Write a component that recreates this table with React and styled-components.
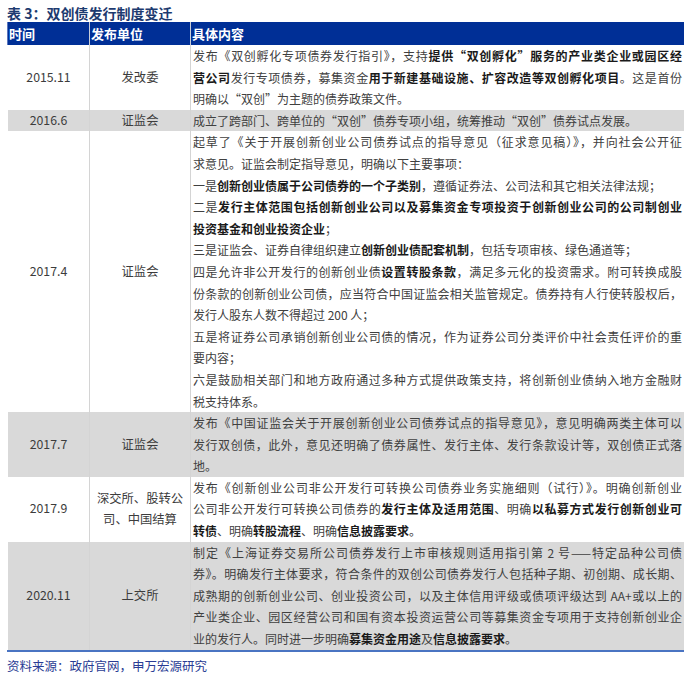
import React from "react";
import styled, { createGlobalStyle } from "styled-components";

const GlobalStyle = createGlobalStyle`
  html, body {
    margin: 0;
    padding: 0;
    background: #fff;
  }
  body {
    font-family: "Noto Sans CJK SC", "Noto Sans", sans-serif;
  }
`;

const Page = styled.div`
  width: 700px;
  padding-left: 7px;
  box-sizing: border-box;
`;

const Caption = styled.div`
  margin-top: 4px;
  height: 18px;
  line-height: 18px;
  font-size: 14px;
  font-weight: 700;
  color: #1d3a6f;
`;

const Table = styled.table`
  width: 671px;
  border-collapse: collapse;
  table-layout: fixed;
  border-bottom: 2px solid #4a74c2;
`;

const HeadCell = styled.th`
  width: ${(p) => p.$w}px;
  height: 23px;
  padding: 0 0 0 1px;
  background: #002f96;
  color: #fff;
  font-size: 13px;
  font-weight: 700;
  text-align: left;
  vertical-align: middle;
  border-left: 1px solid ${(p) => (p.$first ? "#5b78c0" : "#c8cdd8")};
`;

const Row = styled.tr`
  background: ${(p) => (p.$shade ? "#d9d9d9" : "#fff")};
`;

const MetaCell = styled.td`
  padding: 0 6px;
  text-align: center;
  vertical-align: middle;
  font-size: 12.3px;
  line-height: 21.6px;
  color: #3c3c3c;
  border-left: 1px solid ${(p) => (p.$first ? "transparent" : "#d4d4d4")};
`;

const ContentCell = styled.td`
  padding: 0 2px 0 2px;
  vertical-align: top;
  font-size: 12px;
  line-height: 21.6px;
  color: #404040;
  border-left: 1px solid #d4d4d4;
`;

const Line = styled.div`
  white-space: nowrap;
  text-align: left;
  text-align-last: ${(p) => (p.$full ? "justify" : "left")};
`;

const Strong = styled.b`
  font-weight: 700;
  color: #1a1a1a;
`;

const Source = styled.div`
  margin-top: 4px;
  line-height: 20px;
  font-size: 12.5px;
  color: #2a3c94;
`;

const rows = [
  {
    date: "2015.11",
    org: "发改委",
    lines: [
      ["发布《双创孵化专项债券发行指引》，支持**提供“双创孵化”服务的产业类企业或园区经**", true],
      ["**营公司**发行专项债券，募集资金**用于新建基础设施、扩容改造等双创孵化项目**。这是首份", true],
      ["明确以“双创”为主题的债券政策文件。", false],
    ],
  },
  {
    date: "2016.6",
    org: "证监会",
    shade: true,
    lines: [["成立了跨部门、跨单位的“双创”债券专项小组，统筹推动“双创”债券试点发展。", false]],
  },
  {
    date: "2017.4",
    org: "证监会",
    lines: [
      ["起草了《关于开展创新创业公司债券试点的指导意见（征求意见稿）》，并向社会公开征", true],
      ["求意见。证监会制定指导意见，明确以下主要事项：", false],
      ["一是**创新创业债属于公司债券的一个子类别**，遵循证券法、公司法和其它相关法律法规；", false],
      ["二是**发行主体范围包括创新创业公司以及募集资金专项投资于创新创业公司的公司制创业**", true],
      ["**投资基金和创业投资企业**；", false],
      ["三是证监会、证券自律组织建立**创新创业债配套机制**，包括专项审核、绿色通道等；", false],
      ["四是允许非公开发行的创新创业债**设置转股条款**，满足多元化的投资需求。附可转换成股", true],
      ["份条款的创新创业公司债，应当符合中国证监会相关监管规定。债券持有人行使转股权后，", true],
      ["发行人股东人数不得超过 200 人；", false],
      ["五是将证券公司承销创新创业公司债的情况，作为证券公司分类评价中社会责任评价的重", true],
      ["要内容；", false],
      ["六是鼓励相关部门和地方政府通过多种方式提供政策支持，将创新创业债纳入地方金融财", true],
      ["税支持体系。", false],
    ],
  },
  {
    date: "2017.7",
    org: "证监会",
    shade: true,
    lines: [
      ["发布《中国证监会关于开展创新创业公司债券试点的指导意见》，意见明确两类主体可以", true],
      ["发行双创债，此外，意见还明确了债券属性、发行主体、发行条款设计等，双创债正式落", true],
      ["地。", false],
    ],
  },
  {
    date: "2017.9",
    org: "深交所、股转公司、中国结算",
    lines: [
      ["发布《创新创业公司非公开发行可转换公司债券业务实施细则（试行）》。明确创新创业", true],
      ["公司非公开发行可转换公司债券的**发行主体及适用范围**、明确**以私募方式发行创新创业可**", true],
      ["**转债**、明确**转股流程**、明确**信息披露要求**。", false],
    ],
  },
  {
    date: "2020.11",
    org: "上交所",
    shade: true,
    lines: [
      ["制定《上海证券交易所公司债券发行上市审核规则适用指引第 2 号——特定品种公司债", true],
      ["券》。明确发行主体要求，符合条件的双创公司债券发行人包括种子期、初创期、成长期、", true],
      ["成熟期的创新创业公司、创业投资公司，以及主体信用评级或债项评级达到 AA+或以上的", true],
      ["产业类企业、园区经营公司和国有资本投资运营公司等募集资金专项用于支持创新创业企", true],
      ["业的发行人。同时进一步明确**募集资金用途**及**信息披露要求**。", false],
    ],
  },
];

function renderText(text) {
  return text.split("**").map((part, i) =>
    i % 2 === 1 ? <Strong key={i}>{part}</Strong> : <React.Fragment key={i}>{part}</React.Fragment>
  );
}

export default function App() {
  return (
    <Page>
      <GlobalStyle />
      <Caption>表 3：双创债发行制度变迁</Caption>
      <Table>
        <thead>
          <tr>
            <HeadCell $w={80} $first>时间</HeadCell>
            <HeadCell $w={99}>发布单位</HeadCell>
            <HeadCell $w={492}>具体内容</HeadCell>
          </tr>
        </thead>
        <tbody>
          {rows.map((row) => (
            <Row key={row.date} $shade={row.shade}>
              <MetaCell $first>{row.date}</MetaCell>
              <MetaCell>{row.org}</MetaCell>
              <ContentCell>
                {row.lines.map(([text, full], i) => (
                  <Line key={i} $full={full}>
                    {renderText(text)}
                  </Line>
                ))}
              </ContentCell>
            </Row>
          ))}
        </tbody>
      </Table>
      <Source>资料来源：政府官网，申万宏源研究</Source>
    </Page>
  );
}
